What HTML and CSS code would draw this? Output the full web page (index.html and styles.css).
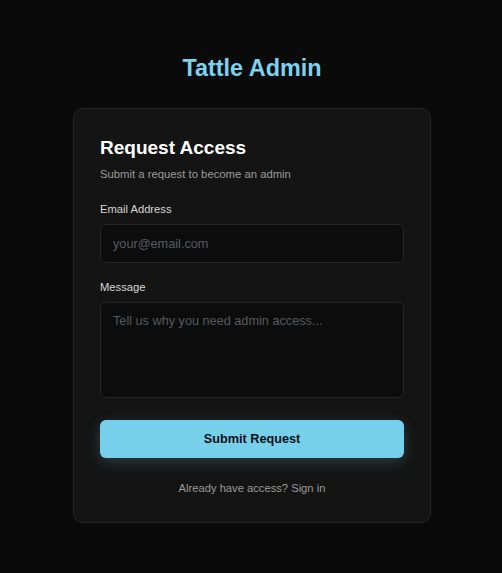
FILE: index.html
```html
<!DOCTYPE html>
<html lang="en">
<head>
<meta charset="utf-8">
<title>Tattle Admin</title>
<link rel="stylesheet" href="styles.css">
</head>
<body>
<main class="page">
  <h1 class="brand">Tattle Admin</h1>
  <section class="card">
    <h2 class="card-title">Request Access</h2>
    <p class="card-sub">Submit a request to become an admin</p>
    <form class="form">
      <div class="field">
        <label class="label" for="email">Email Address</label>
        <input class="input" id="email" type="email" placeholder="your@email.com">
      </div>
      <div class="field">
        <label class="label" for="msg">Message</label>
        <textarea class="input textarea" id="msg" placeholder="Tell us why you need admin access..."></textarea>
      </div>
      <button class="btn" type="button">Submit Request</button>
    </form>
    <p class="foot">Already have access? Sign in</p>
  </section>
</main>
</body>
</html>
```
FILE: styles.css
```css
* { box-sizing: border-box; }
html, body { margin: 0; padding: 0; }
body {
  background: #0a0a0a;
  font-family: "Liberation Sans", Arial, Helvetica, sans-serif;
  color: #ededed;
  min-height: 573px;
}
.page {
  display: flex;
  flex-direction: column;
  align-items: center;
  padding-top: 54px;
  padding-left: 2px;
}
.brand {
  margin: 0 0 26px;
  font-size: 23.4px;
  line-height: 28px;
  font-weight: 700;
  color: #7dd3ee;
}
.card {
  width: 358px;
  background: #141414;
  border: 1px solid #242424;
  border-radius: 10px;
  padding: 27px 26px 27px;
}
.card-title {
  margin: 0;
  font-size: 19px;
  line-height: 23px;
  font-weight: 700;
  color: #ffffff;
}
.card-sub {
  margin: 8px 0 0;
  font-size: 11.3px;
  line-height: 14px;
  color: #9a9a9a;
}
.form {
  margin-top: 21px;
  display: flex;
  flex-direction: column;
}
.field {
  display: flex;
  flex-direction: column;
  gap: 8px;
  margin-bottom: 17px;
}
.field + .field { margin-bottom: 22px; }
.label {
  font-size: 11.2px;
  line-height: 14px;
  color: #d6d6d6;
}
.input {
  width: 100%;
  height: 39px;
  background: #0c0c0c;
  border: 1px solid #262626;
  border-radius: 6px;
  padding: 0 12px;
  font-family: inherit;
  font-size: 12.7px;
  color: #eee;
  outline: none;
}
.input::placeholder { color: #555a60; }
.textarea {
  height: 96px;
  padding: 11px 12px;
  line-height: 15px;
  resize: none;
  display: block;
}
.btn {
  width: 100%;
  height: 38px;
  border: none;
  border-radius: 6px;
  background: #76d0ec;
  color: #0d1117;
  font-family: inherit;
  font-size: 12.7px;
  font-weight: 700;
  box-shadow: 0 4px 14px rgba(118, 208, 236, 0.22);
  cursor: pointer;
}
.foot {
  margin: 23px 0 0;
  text-align: center;
  font-size: 11.2px;
  line-height: 14px;
  color: #9a9a9a;
}
```
